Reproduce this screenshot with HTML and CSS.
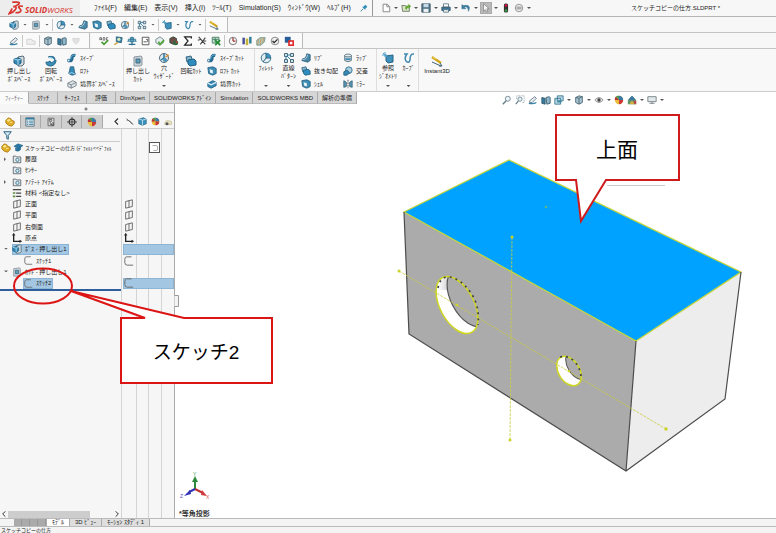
FILE: index.html
```html
<!DOCTYPE html>
<html lang="ja">
<head>
<meta charset="utf-8">
<title>スケッチコピーの仕方.SLDPRT</title>
<link rel="stylesheet" href="styles.css">
</head>
<body>
<svg class="defs" aria-hidden="true">
  <symbol id="boss" viewBox="0 0 12 12"><path d="M5 2l5-1 1 1v7l-2 2H5z" fill="#d5dde2" stroke="#526b78"/><path d="M1 4l4-1 3 1v4L5 10 1 8z" fill="#3688b5" stroke="#1f5f84"/><path d="M1 4l4 1 3-1M5 5v5" stroke="#a9daf0" fill="none"/></symbol>
  <symbol id="cut" viewBox="0 0 12 12"><path d="M2 2l7-1 1 1v8l-2 1H2z" fill="#c9d2d8" stroke="#8b989f"/><path d="M4 4h4v4H4z" fill="#5f9fbe" stroke="#456b80"/></symbol>
  <symbol id="revolve" viewBox="0 0 12 12"><path d="M3 2q6-2 7 2 0 3-4 4L5 6Q3 8 1 7q0 4 5 4 5-1 5-6" fill="#3b8fbb" stroke="#226589"/><path d="M4 3q3-1 4 1" stroke="#b9e3f3" fill="none"/></symbol>
  <symbol id="sweep" viewBox="0 0 12 12"><path d="M2 9q4 1 4-3t4-3" stroke="#256a90" stroke-width="4" fill="none"/><path d="M2 8q3 0 3-3 1-3 5-3" stroke="#6dbbdc" fill="none"/><circle cx="2" cy="9" r="1.6" fill="#dceef6" stroke="#256a90"/></symbol>
  <symbol id="loft" viewBox="0 0 12 12"><path d="M4 1h4l1 6 1 3-4 1-4-2 1-3z" fill="#3688b5" stroke="#1f5f84"/><path d="M2 9l4-1 4 2" stroke="#b5dff2" fill="none"/></symbol>
  <symbol id="boundary" viewBox="0 0 12 12"><path d="M1 5l6-3 4 2v4l-6 3-4-2z" fill="#dfe4e7" stroke="#6d7a82"/><path d="M1 5l4 2 6-3M5 7v4" stroke="#6d7a82" fill="none"/></symbol>
  <symbol id="boundarycut" viewBox="0 0 12 12"><path d="M1 5l6-3 4 2v4l-6 3-4-2z" fill="#3688b5" stroke="#1f5f84"/><path d="M1 5l4 2 6-3" stroke="#d8eef7" stroke-width="1.5" fill="none"/></symbol>
  <symbol id="wizard" viewBox="0 0 12 12"><circle cx="6" cy="6" r="4.5" fill="#dce8ee" stroke="#536c79"/><path d="M6 6V2M6 6L3 8" stroke="#2877a4" stroke-width="1.5"/><path d="M6 6l4-4 1 2z" fill="#d68628"/><circle cx="7" cy="8" r="2" fill="#4b91b8"/></symbol>
  <symbol id="fillet" viewBox="0 0 12 12"><circle cx="6" cy="6" r="4.8" fill="#e4eef2" stroke="#3b748f"/><path d="M6 6V1q5 0 5 5z" fill="#3f91b9"/><path d="M6 1v5h5M6 6l-3 4" fill="none" stroke="#2d6683"/></symbol>
  <symbol id="pattern" viewBox="0 0 12 12"><path d="M1.500 1.500h3v3h-3zM7.500 1.500h3v3h-3zM1.500 7.500h3v3h-3zM7.500 7.500h3v3h-3z" fill="#c9e1ed" stroke="#4c6876"/><path d="M4 3h4M3 4v4M4 4l4 4" stroke="#357d9e"/></symbol>
  <symbol id="rib" viewBox="0 0 12 12"><path d="M7 1l4 1v7l-3 2-7-2 1-2q4 0 5-6z" fill="#4a86a6" stroke="#2f627e"/><path d="M2 8q5 0 6-6" stroke="#b9dcea" fill="none"/></symbol>
  <symbol id="draft" viewBox="0 0 12 12"><path d="M1 2l5-1 1 3v3H2z" fill="#86b5cb" stroke="#326781"/><path d="M3 5l6-1 2 2v4l-6 1-2-2z" fill="#2f8dbe" stroke="#1f5f84"/></symbol>
  <symbol id="shell" viewBox="0 0 12 12"><path d="M1 2l6-1 4 2v6l-4 2-5-2z" fill="#3f8eb5" stroke="#245f7e"/><path d="M3 4l4 1v4L4 8z" fill="#eef5f8"/></symbol>
  <symbol id="wrap" viewBox="0 0 12 12"><path d="M2 3v6q4 3 8 0V3z" fill="#d2dde3" stroke="#4b6675"/><ellipse cx="6" cy="3" rx="4" ry="1.700" fill="#eef3f5" stroke="#4b6675"/><path d="M3 6q3 1 6 0v2q-3 1-6 0z" fill="#3688b5"/></symbol>
  <symbol id="intersect" viewBox="0 0 12 12"><circle cx="7" cy="5" r="4" fill="#a8cfe1" stroke="#2e6785"/><path d="M1 7l4-2 3 3-3 3H1z" fill="#3688b5" stroke="#245f7e"/></symbol>
  <symbol id="mirror" viewBox="0 0 12 12"><path d="M1 2l3 2v5l-3 1zM11 2L8 4v5l3 1z" fill="#5b9ab9" stroke="#345f75"/><path d="M6 1v10" stroke="#333" stroke-dasharray="2 1"/></symbol>
  <symbol id="refgeo" viewBox="0 0 12 12"><path d="M4 4l7-1v7l-5 1-2-2z" fill="#3f91bc" stroke="#246487"/><path d="M3 0v5M0 3h5M1 1l4 4" stroke="#4c9fc8"/></symbol>
  <symbol id="curve" viewBox="0 0 12 12"><path d="M1 2h3q-3 4-1 7 3 3 4-1 0-6 3-6h1" fill="none" stroke="#4088af" stroke-width="1.500"/></symbol>
  <symbol id="instant" viewBox="0 0 12 12"><path d="M1 2l9 6" stroke="#d3a51b" stroke-width="2.500"/><path d="M2 2l3 2" stroke="#f3e373" stroke-width="1"/><path d="M1 7l9 4M9 8l2 3-3 0" stroke="#3d6173" fill="none"/></symbol>
  <symbol id="pencil" viewBox="0 0 12 12"><path d="M2 7l6-5 2 2-5 5H2z" fill="#e9eff2" stroke="#597381"/><path d="M1 10q6 1 9-1" stroke="#3783a8" fill="none" stroke-width="1.500"/></symbol>
  <symbol id="ghost" viewBox="0 0 12 12"><path d="M1 4h6l1 2h3v4H1z" fill="#eee" stroke="#ccc"/></symbol>
  <symbol id="ghostball" viewBox="0 0 12 12"><path d="M2 3h8l-1 4-3 3-3-3z" fill="#e2e2e2" stroke="#d2d2d2"/></symbol>
  <symbol id="lamp" viewBox="0 0 12 12"><path d="M1 10q0-6 5-5l4 1v4z" fill="#e9e2c4" stroke="#c9bd93"/><circle cx="4" cy="9" r="2" fill="#555"/></symbol>
  <symbol id="cube" viewBox="0 0 12 12"><path d="M2 3l4-2 4 1v7l-4 2-4-2z" fill="#aac5d1" stroke="#425e6c"/><path d="M2 3l4 1v7M6 4l4-2" fill="none" stroke="#425e6c"/></symbol>
  <symbol id="section" viewBox="0 0 12 12"><path d="M1 3l4 1v7l-4-1z" fill="#377c9e" stroke="#31566a"/><path d="M6 3l4-1 1 1v7l-4 1z" fill="#90b8ca" stroke="#31566a"/></symbol>
  <symbol id="bluecube" viewBox="0 0 12 12"><path d="M1 3l6-2 4 2v6l-5 2-5-2z" fill="#3c91ba" stroke="#296b8d"/><path d="M1 3l5 1v7M6 4l5-1" fill="none" stroke="#d1edf7"/></symbol>
  <symbol id="abc" viewBox="0 0 12 12"><path d="M1 5V2h2v3M1 4h2M5 2v3h2V2zM11 2H9v3h2" stroke="#444" fill="none" stroke-width=".8"/><path d="M3 7l3 3 5-5" stroke="#4a9b36" stroke-width="2" fill="none"/></symbol>
  <symbol id="measure" viewBox="0 0 12 12"><path d="M4 1l7 1-1 6-6-1z" fill="#3a86ad" stroke="#295e79"/><circle cx="7" cy="4" r="2" fill="#d7ebbd"/><path d="M1 10l4-3 1 2-4 2z" fill="#d0ad49"/></symbol>
  <symbol id="mass" viewBox="0 0 12 12"><path d="M6 1v10M2 10h8" stroke="#2c708e" stroke-width="1.500"/><path d="M1 4h10M4 2h4v5H4z" stroke="#2c708e" fill="#5ba4c1"/><path d="M0 7h4L2 4zM8 7h4l-2-3z" fill="#3d87a6"/></symbol>
  <symbol id="sensor" viewBox="0 0 12 12"><path d="M1.500 1.500h8v9h-8zM3 7h4M6 4h2v3" fill="#fff" stroke="#444"/></symbol>
  <symbol id="check" viewBox="0 0 12 12"><path d="M1 4l5-3 4 3v4l-4 3-5-3z" fill="#e5eeee" stroke="#698087"/><path d="M4 7l2 3 5-5" stroke="#52a43b" stroke-width="2" fill="none"/></symbol>
  <symbol id="stats" viewBox="0 0 12 12"><path d="M1 3l4-2 4 2v5l-4 2-4-2z" fill="#704c46" stroke="#2d4b35"/><circle cx="8" cy="8" r="3" fill="#2e6845"/><path d="M8 8V5l3 3z" fill="#d53b32"/></symbol>
  <symbol id="sum" viewBox="0 0 12 12"><path d="M10 3V1H2l4 5-4 5h8V9" fill="none" stroke="#222" stroke-width="1.500"/></symbol>
  <symbol id="compare" viewBox="0 0 12 12"><path d="M2 1l8 9M1 5l4-1M4 10l6-8M8 6h3" stroke="#444" stroke-width="1.300" fill="none"/></symbol>
  <symbol id="sheet" viewBox="0 0 12 12"><path d="M1.500 1.500h8v7h-8zM2 4h7M5 2v6" fill="#c7e2d0" stroke="#397660"/><path d="M5 5l6 6M11 5l-6 6" stroke="#268b36" stroke-width="2"/></symbol>
  <symbol id="gauge" viewBox="0 0 12 12"><circle cx="6" cy="6" r="4.500" fill="#f7f7f7" stroke="#666"/><path d="M6 6V2M6 6h3" stroke="#a43434" stroke-width="1.500"/></symbol>
  <symbol id="bars" viewBox="0 0 12 12"><path d="M2 2v8" stroke="#4b4f9b" stroke-width="3"/><path d="M6 3v8" stroke="#c7b43a" stroke-width="3"/><path d="M10 1v8" stroke="#327e9b" stroke-width="3"/></symbol>
  <symbol id="zebra" viewBox="0 0 12 12"><path d="M1 5l4-3h6l-1 5-4 4H1z" fill="#a9cdbf" stroke="#6d8c80"/><path d="M3 4l-1 6M6 3L5 10M9 2L8 8" stroke="#d29a65" stroke-width="1.200"/></symbol>
  <symbol id="okring" viewBox="0 0 12 12"><circle cx="6" cy="6" r="4.600" fill="#f1f1f1" stroke="#777"/><path d="M3 6l2 2 4-4" stroke="#222" stroke-width="1.500" fill="none"/></symbol>
  <symbol id="redblue" viewBox="0 0 12 12"><path d="M1 1h7v7H1z" fill="#285f98"/><path d="M5 5h7v7H5z" fill="#e02d31"/><path d="M7 7h3v3H7z" fill="#fff"/></symbol>
  <symbol id="new" viewBox="0 0 12 12"><path d="M2.500 1.500h5l3 3v6h-8zM7 1.500v3h3" fill="#fff" stroke="#777"/></symbol>
  <symbol id="open" viewBox="0 0 12 12"><path d="M1 3h4l1 1h4v6H2z" fill="#d9e5c6" stroke="#65735a"/><path d="M5 7q0-4 4-4V1l3 3-3 3V5Q7 5 7 8z" fill="#60a52d"/></symbol>
  <symbol id="save" viewBox="0 0 12 12"><path d="M1 1h10v10H1z" fill="#56788b" stroke="#34505f"/><path d="M3 1h6v4H3z" fill="#c4dce8"/><path d="M3 7h6v4H3z" fill="#e9eff2"/></symbol>
  <symbol id="print" viewBox="0 0 12 12"><path d="M3 1h6v4H3z" fill="#fff" stroke="#567080"/><path d="M1 5h10v4H1z" fill="#39789b" stroke="#34505f"/><path d="M3 8h6v3H3z" fill="#f2f7fa" stroke="#567080"/></symbol>
  <symbol id="undo" viewBox="0 0 12 12"><path d="M1 2v5h5L4 5q4-2 5 5 4-9-6-7z" fill="#3b7ea4" stroke="#28607f" stroke-width=".5"/></symbol>
  <symbol id="arrow" viewBox="0 0 12 12"><path d="M3 1v9l2-2 2 3 1-1-1-3h3z" fill="#f6f6f6" stroke="#777" stroke-width=".8"/></symbol>
  <symbol id="light" viewBox="0 0 12 12"><rect x="3.500" y=".5" width="5" height="11" rx="2" fill="#333"/><circle cx="6" cy="3" r="1.500" fill="#d14"/><circle cx="6" cy="9" r="1.500" fill="#3a4"/></symbol>
  <symbol id="gear" viewBox="0 0 12 12"><circle cx="6" cy="6" r="4.500" fill="#eee" stroke="#888"/><path d="M3 5h6M3 7h6" stroke="#777"/></symbol>
  <symbol id="pin" viewBox="0 0 12 12"><path d="M1 11l4-4" stroke="#2d6e8f" stroke-width="1.300"/><path d="M3 4l5 5V7l3-3-3-3-3 3z" fill="#2d8eb9"/></symbol>
  <symbol id="zoomfit" viewBox="0 0 12 12"><circle cx="7" cy="4.500" r="3" fill="#edf3f6" stroke="#66808d"/><path d="M5 7l-4 4" stroke="#66808d" stroke-width="1.800"/></symbol>
  <symbol id="zoomarea" viewBox="0 0 12 12"><path d="M2 5V1h9v8H8" stroke="#9aabb3" stroke-dasharray="2 1" fill="none"/><circle cx="6" cy="5" r="2.500" fill="#edf3f6" stroke="#66808d"/><path d="M4 7l-3 4" stroke="#66808d" stroke-width="1.500"/></symbol>
  <symbol id="orient" viewBox="0 0 12 12"><path d="M4 1h7v6H4zM1 4h7v7H1z" fill="#b9d7e3" stroke="#34748e"/><path d="M4 7h5v2H4z" fill="#3688a5"/></symbol>
  <symbol id="eye" viewBox="0 0 12 12"><path d="M1 6q5-6 10 0-5 6-10 0z" fill="#e5e5e5" stroke="#888"/><circle cx="6" cy="6" r="2" fill="#444"/></symbol>
  <symbol id="ball" viewBox="0 0 12 12"><circle cx="6" cy="6" r="5" fill="#e8be38"/><path d="M6 6V1a5 5 0 0 1 5 5z" fill="#3b79ad"/><path d="M6 6L2 2a5 5 0 0 1 4-1z" fill="#4b9a56"/><path d="M6 6h5a5 5 0 0 1-5 5z" fill="#c9373b"/><path d="M6 6l-4-4a5 5 0 0 0-1 4z" fill="#b63338"/></symbol>
  <symbol id="scene" viewBox="0 0 12 12"><path d="M1 11V6l5-5 5 5v5z" fill="#629768"/><path d="M2 5l4-4 4 4-4 3z" fill="#3d78a3"/><path d="M3 11l3-5 3 5z" fill="#d1b23d"/><path d="M8 7h3v4H9z" fill="#bf4244"/></symbol>
  <symbol id="monitor" viewBox="0 0 12 12"><path d="M1 2h10v6H1zM6 8v2M3 10h6" fill="#e2e9ec" stroke="#6c767b"/></symbol>
  <symbol id="part" viewBox="0 0 12 12"><path d="M1 4l3-3 3 1 1 2 3 1v3l-3 3-4-1-3-3z" fill="#dfac24" stroke="#a97813"/><path d="M2 4l3-2 2 2-3 2z" fill="#f8e48b"/><path d="M6 7l3-1" stroke="#fff2a5"/></symbol>
  <symbol id="hat" viewBox="0 0 12 12"><path d="M1 4l5-3 6 2-5 4zM3 6v3q3 2 6-1V5l-2 2z" fill="#2878a5" stroke="#1f597b" stroke-width=".6"/></symbol>
  <symbol id="list" viewBox="0 0 12 12"><path d="M1 1h10v10H1z" fill="#e4ebee" stroke="#526a78"/><path d="M1 2h10" stroke="#317ca0" stroke-width="2"/><path d="M2 5h2M2 7h2M2 9h2M5 5h5M5 7h5M5 9h5" stroke="#317ca0"/></symbol>
  <symbol id="config" viewBox="0 0 12 12"><path d="M2.500 1.500h7v9h-7z" fill="#eee" stroke="#555"/><path d="M4 3h3v2H4zM5 5v4h3M7 7h2v3H7z" fill="none" stroke="#555"/></symbol>
  <symbol id="target" viewBox="0 0 12 12"><circle cx="6" cy="6" r="3.500" fill="none" stroke="#333" stroke-width="1.300"/><path d="M6 0v12M0 6h12" stroke="#333"/></symbol>
  <symbol id="hide" viewBox="0 0 12 12"><path d="M2 2l8 8M2 4l4 1 5 5" stroke="#555" fill="none"/></symbol>
  <symbol id="funnel" viewBox="0 0 12 12"><path d="M1 1h10L7 6v5l-2-1V6z" fill="#d9edf6" stroke="#245e7e" stroke-width="1.300"/></symbol>
  <symbol id="folder" viewBox="0 0 12 12"><path d="M1.500 2.500h3l1 1h5v7h-9z" fill="#e7eaec" stroke="#555e64"/><circle cx="6.500" cy="7" r="2" fill="#d3e8f0" stroke="#38758e"/></symbol>
  <symbol id="material" viewBox="0 0 12 12"><path d="M1 2h10M5 6h6M5 10h6" stroke="#444" stroke-width="1.500"/><path d="M1 5h3v2H1zM1 9h3v2H1z" fill="#5f8c3d"/></symbol>
  <symbol id="plane" viewBox="0 0 12 12"><path d="M2 3l4-1v8l-4 1zM6 2l4-1v8l-4 1" fill="none" stroke="#555"/></symbol>
  <symbol id="origin" viewBox="0 0 12 12"><path d="M2 1v9h9" fill="none" stroke="#222" stroke-width="1.600"/><path d="M0 3l2-3 2 3zM9 8l3 2-3 2z" fill="#222"/></symbol>
  <symbol id="sketch" viewBox="0 0 12 12"><path d="M9 1H3Q1 1 1 4v4q0 3 3 3h7" fill="none" stroke="#666" stroke-width="1.100"/></symbol>
  <symbol id="chev" viewBox="0 0 12 12"><path d="M8 2L4 6l4 4" fill="none" stroke="#333" stroke-width="1.500"/></symbol>
  <symbol id="chevr" viewBox="0 0 12 12"><path d="M4 2l4 4-4 4" fill="none" stroke="#333" stroke-width="1.500"/></symbol>
</svg>

<header>
  <div class="titlebar">
    <div class="brand">
      <svg class="ds" viewBox="0 0 16 14" aria-hidden="true"><path d="M4 1h4q4 0 2 2L5 6M5 5q4 0 2 3-2 3-6 4l3-5M14 5q-4-1-4 1l2 2q1 3-5 3" fill="none" stroke="#d8352f" stroke-width="1.500"/></svg>
      <span><b>SOLID</b>WORKS</span>
    </div>
    <nav class="menu">
      <button>ﾌｧｲﾙ(F)</button><button>編集(E)</button><button>表示(V)</button><button>挿入(I)</button><button>ﾂｰﾙ(T)</button><button>Simulation(S)</button><button>ｳｨﾝﾄﾞｳ(W)</button><button>ﾍﾙﾌﾟ(H)</button>
      <button class="pin" aria-label="ピン"><svg><use href="#pin"/></svg></button>
    </nav>
    <div class="quick">
      <button aria-label="新規"><svg><use href="#new"/></svg></button><i></i>
      <button aria-label="開く"><svg><use href="#open"/></svg></button><i></i>
      <button aria-label="保存"><svg><use href="#save"/></svg></button><i></i>
      <button aria-label="印刷"><svg><use href="#print"/></svg></button><i></i>
      <button aria-label="元に戻す"><svg><use href="#undo"/></svg></button><i></i>
      <button class="pressed" aria-label="選択"><svg><use href="#arrow"/></svg></button><i></i>
      <button aria-label="再構築"><svg><use href="#light"/></svg></button>
      <button aria-label="オプション"><svg><use href="#gear"/></svg></button><i></i>
    </div>
    <div class="doc">スケッチコピーの仕方.SLDPRT *</div>
  </div>

  <div class="strip">
    <div class="tools">
      <button aria-label="押し出し"><svg><use href="#boss"/></svg></button><i></i>
      <button aria-label="カット"><svg><use href="#cut"/></svg></button><i></i><hr>
      <button aria-label="フィレット"><svg><use href="#fillet"/></svg></button><i></i>
      <button aria-label="リブ"><svg><use href="#rib"/></svg></button>
      <button aria-label="シェル"><svg><use href="#shell"/></svg></button>
      <button aria-label="抜き勾配"><svg><use href="#draft"/></svg></button>
      <button aria-label="穴"><svg><use href="#wizard"/></svg></button><hr>
      <button aria-label="パターン"><svg><use href="#pattern"/></svg></button><i></i><hr>
      <button aria-label="参照"><svg><use href="#refgeo"/></svg></button><i></i>
      <button aria-label="カーブ"><svg><use href="#curve"/></svg></button><i></i><hr>
      <button aria-label="Instant3D"><svg><use href="#instant"/></svg></button>
    </div>
  </div>
  <div class="strip">
    <div class="tools">
      <button aria-label="スケッチ"><svg><use href="#pencil"/></svg></button><hr>
      <button aria-label="フォルダ"><svg><use href="#ghost"/></svg></button><hr>
      <button aria-label="表示"><svg><use href="#cube"/></svg></button>
      <button aria-label="断面"><svg><use href="#section"/></svg></button>
      <button aria-label="影"><svg><use href="#ghostball"/></svg></button>
    </div>
    <div class="tools">
      <button aria-label="スペル"><svg><use href="#abc"/></svg></button>
      <button aria-label="測定"><svg><use href="#measure"/></svg></button>
      <button aria-label="質量"><svg><use href="#mass"/></svg></button>
      <button aria-label="断面特性"><svg><use href="#sensor"/></svg></button>
      <button aria-label="チェック"><svg><use href="#check"/></svg></button>
      <button aria-label="統計"><svg><use href="#stats"/></svg></button>
      <button aria-label="関係式"><svg><use href="#sum"/></svg></button>
      <button aria-label="比較"><svg><use href="#compare"/></svg></button>
      <button aria-label="テーブル"><svg><use href="#sheet"/></svg></button><hr>
      <button aria-label="評価"><svg><use href="#gauge"/></svg></button>
      <button aria-label="解析"><svg><use href="#bars"/></svg></button>
      <button aria-label="曲率"><svg><use href="#zebra"/></svg></button>
      <button aria-label="検証"><svg><use href="#okring"/></svg></button>
      <button aria-label="差分"><svg><use href="#redblue"/></svg></button>
    </div>
  </div>

  <div class="ribbon">
    <section class="g1">
      <button class="big low"><svg><use href="#boss"/></svg><span>押し出し</span><span>ﾎﾞｽ/ﾍﾞｰｽ</span></button>
      <button class="big low"><svg><use href="#revolve"/></svg><span>回転</span><span>ﾎﾞｽ/ﾍﾞｰｽ</span></button>
      <div class="stack">
        <button><svg><use href="#sweep"/></svg>ｽｲｰﾌﾟ</button>
        <button><svg><use href="#loft"/></svg>ﾛﾌﾄ</button>
        <button><svg><use href="#boundary"/></svg>境界ﾎﾞｽ/ﾍﾞｰｽ</button>
      </div>
    </section>
    <section class="g2">
      <button class="big low"><svg><use href="#cut"/></svg><span>押し出し</span><span>ｶｯﾄ</span></button>
      <button class="big"><svg><use href="#wizard"/></svg><span>穴</span><span>ｳｨｻﾞｰﾄﾞ</span><i></i></button>
      <button class="big low"><svg><use href="#draft"/></svg><span>回転ｶｯﾄ</span></button>
      <div class="stack">
        <button><svg><use href="#sweep"/></svg>ｽｲｰﾌﾟｶｯﾄ</button>
        <button><svg><use href="#shell"/></svg>ﾛﾌﾄ ｶｯﾄ</button>
        <button><svg><use href="#boundarycut"/></svg>境界ｶｯﾄ</button>
      </div>
    </section>
    <section class="g3">
      <button class="big"><svg><use href="#fillet"/></svg><span>ﾌｨﾚｯﾄ</span><i></i></button>
      <button class="big"><svg><use href="#pattern"/></svg><span>直線</span><span>ﾊﾟﾀｰﾝ</span><i></i></button>
      <div class="stack">
        <button><svg><use href="#rib"/></svg>ﾘﾌﾞ</button>
        <button><svg><use href="#draft"/></svg>抜き勾配</button>
        <button><svg><use href="#shell"/></svg>ｼｪﾙ</button>
      </div>
      <div class="stack">
        <button><svg><use href="#wrap"/></svg>ﾗｯﾌﾟ</button>
        <button><svg><use href="#intersect"/></svg>交差</button>
        <button><svg><use href="#mirror"/></svg>ﾐﾗｰ</button>
      </div>
    </section>
    <section class="g4">
      <button class="big"><svg><use href="#refgeo"/></svg><span>参照</span><span>ｼﾞｵﾒﾄﾘ</span><i></i></button>
      <button class="big"><svg><use href="#curve"/></svg><span>ｶｰﾌﾞ</span><i></i></button>
    </section>
    <section class="g5">
      <button class="big low"><svg><use href="#instant"/></svg><span>Instant3D</span></button>
    </section>
  </div>

  <div class="tabrow">
    <nav class="tabs">
      <button class="on">ﾌｨｰﾁｬｰ</button><button>ｽｹｯﾁ</button><button>ｻｰﾌｪｽ</button><button>評価</button><button>DimXpert</button><button>SOLIDWORKS ｱﾄﾞｲﾝ</button><button>Simulation</button><button>SOLIDWORKS MBD</button><button>解析の準備</button>
    </nav>
    <div class="headsup">
      <button aria-label="全体表示"><svg><use href="#zoomfit"/></svg></button>
      <button aria-label="一部拡大"><svg><use href="#zoomarea"/></svg></button>
      <button aria-label="前の表示"><svg><use href="#pencil"/></svg></button>
      <button aria-label="断面表示"><svg><use href="#section"/></svg></button>
      <button aria-label="表示方向"><svg><use href="#orient"/></svg></button><i></i>
      <button aria-label="表示スタイル"><svg><use href="#cube"/></svg></button><i></i>
      <button aria-label="表示/非表示"><svg><use href="#eye"/></svg></button><i></i>
      <button aria-label="外観"><svg><use href="#ball"/></svg></button>
      <button aria-label="シーン"><svg><use href="#scene"/></svg></button><i></i>
      <button aria-label="表示設定"><svg><use href="#monitor"/></svg></button><i></i>
    </div>
  </div>
</header>

<main>
  <aside>
    <div class="grip"></div>
    <div class="ptabs">
      <div class="pt">
        <button class="on" aria-label="ツリー"><svg><use href="#part"/></svg></button>
        <button aria-label="プロパティ"><svg><use href="#list"/></svg></button>
        <button aria-label="コンフィギュレーション"><svg><use href="#config"/></svg></button>
        <button aria-label="DimXpert"><svg><use href="#target"/></svg></button>
        <button aria-label="表示"><svg><use href="#ball"/></svg></button>
      </div>
      <div class="pane-icons">
        <svg><use href="#chev"/></svg><svg><use href="#hide"/></svg><svg><use href="#bluecube"/></svg><svg><use href="#ball"/></svg><svg><use href="#lamp"/></svg>
      </div>
    </div>
    <div class="tree">
      <div class="filter"><svg><use href="#funnel"/></svg></div>
      <ul>
        <li class="root"><span class="node"><svg><use href="#part"/></svg><svg><use href="#hat"/></svg><span>スケッチコピーの仕方 (ﾃﾞﾌｫﾙﾄ&lt;&lt;ﾃﾞﾌｫﾙ</span></span><span class="cell"><b class="swatch"><svg><use href="#sketch"/></svg></b></span></li>
        <li class="closed"><span class="node"><svg><use href="#folder"/></svg><span>履歴</span></span></li>
        <li><span class="node"><svg><use href="#folder"/></svg><span>ｾﾝｻｰ</span></span></li>
        <li class="closed"><span class="node"><svg><use href="#folder"/></svg><span>ｱﾉﾃｰﾄ ｱｲﾃﾑ</span></span></li>
        <li><span class="node"><svg><use href="#material"/></svg><span>材料 &lt;指定なし&gt;</span></span></li>
        <li><span class="node"><svg><use href="#plane"/></svg><span>正面</span></span><span class="cell"><svg><use href="#plane"/></svg></span></li>
        <li><span class="node"><svg><use href="#plane"/></svg><span>平面</span></span><span class="cell"><svg><use href="#plane"/></svg></span></li>
        <li><span class="node"><svg><use href="#plane"/></svg><span>右側面</span></span><span class="cell"><svg><use href="#plane"/></svg></span></li>
        <li><span class="node"><svg><use href="#origin"/></svg><span>原点</span></span><span class="cell"><svg><use href="#origin"/></svg></span></li>
        <li class="opened sel"><span class="node"><svg><use href="#boss"/></svg><span>ﾎﾞｽ - 押し出し1</span></span><span class="cell"></span></li>
        <li class="child"><span class="node"><svg><use href="#sketch"/></svg><span>ｽｹｯﾁ1</span></span><span class="cell"><svg><use href="#sketch"/></svg></span></li>
        <li class="opened"><span class="node"><svg><use href="#cut"/></svg><span>ｶｯﾄ - 押し出し1</span></span></li>
        <li class="child sel"><span class="node"><svg><use href="#sketch"/></svg><span>ｽｹｯﾁ2</span></span><span class="cell"><svg><use href="#sketch"/></svg></span></li>
      </ul>
      <div class="rollback"></div>
      <div class="scroll"><svg><use href="#chev"/></svg><span></span><svg><use href="#chevr"/></svg></div>
    </div>
  </aside>
  <div class="view">
    <svg viewBox="175 104 601 414" role="img" aria-label="穴のある直方体">
      <defs>
        <linearGradient id="bore"><stop offset="0" stop-color="#fff"/><stop offset="1" stop-color="#c4c4c4"/></linearGradient>
        <clipPath id="big"><ellipse cx="457" cy="305" rx="31" ry="17" transform="rotate(62 457 305)"/></clipPath>
        <clipPath id="small"><ellipse cx="569" cy="371" rx="16" ry="10.500" transform="rotate(58 569 371)"/></clipPath>
      </defs>
      <path d="M607 185.500h58" stroke="#ccc"/>
      <path d="M404 212L636 341 626 471 409 334z" fill="#ababab"/>
      <path d="M636 341L741 272 725 399 626 471z" fill="#ededed"/>
      <path d="M404 212L509 160 741 272 636 341z" fill="#00a2ff" stroke="#c5d63c" stroke-width="1.300"/>
      <path d="M404 212L409 334 626 471 725 399 741 272M636 341L626 471" fill="none" stroke="#4c4c4c" stroke-width="1.200"/>
      <g clip-path="url(#big)"><path d="M430 270h60v70h-60z" fill="#fff"/><path d="M438 276h14v14h-14z" fill="url(#bore)"/><ellipse cx="468" cy="298" rx="31" ry="17" transform="rotate(62 468 298)" fill="#ababab" stroke="#555" stroke-width="1.200"/></g>
      <g clip-path="url(#small)"><path d="M550 350h40v40h-40z" fill="#fff"/><ellipse cx="578" cy="365" rx="16" ry="10.500" transform="rotate(58 578 365)" fill="#ababab" stroke="#555"/></g>
      <g fill="none" stroke="#cfd820" stroke-width="1.500">
        <ellipse cx="457" cy="305" rx="31" ry="17" transform="rotate(62 457 305)"/>
        <ellipse cx="569" cy="371" rx="16" ry="10.500" transform="rotate(58 569 371)"/>
      </g>
      <g fill="none" stroke="#444" stroke-width="1.700" stroke-dasharray="2 4">
        <path d="M438 288Q440 276 450 277 461 279 471 293 480 306 478 325"/>
        <path d="M560 357Q568 355 574 361 580 367 581 376"/>
      </g>
      <path d="M512 237L510 440M399 271L666 429" stroke="#c9cc3e" stroke-width=".8" stroke-dasharray="3 1"/>
      <g fill="#ccd428"><circle cx="512" cy="237" r="1.500"/><circle cx="510" cy="440" r="1.500"/><circle cx="399" cy="271" r="1.500"/><circle cx="666" cy="429" r="1.700"/><circle cx="457" cy="305" r="1.300"/><circle cx="569" cy="371" r="1.300"/></g>
      <circle cx="546" cy="207" r="1.300" fill="#5cb78b"/>
      <g stroke-width="2"><path d="M195 489V480" stroke="#2b8a3c"/><path d="M195 489l8 4" stroke="#c0302e"/><path d="M195 489l-6 3" stroke="#2e31b5"/></g>
      <path d="M192 482l3-6 3 6z" fill="#2b8a3c"/><path d="M201 495l1-5 5 6z" fill="#d0393a"/><path d="M190 490l1 4-7 2z" fill="#2e31b5"/>
      <g class="axis"><text x="193" y="476" fill="#3a9a4a">Y</text><text x="206" y="499" fill="#d55">X</text><text x="180" y="498" fill="#55c">Z</text></g>
      <text class="viewname" x="179" y="516">*等角投影</text>
    </svg>
  </div>
  <svg class="notes" viewBox="0 104 776 414" role="img" aria-label="注釈">
    <path d="M174.500 295.500h4v11h-4" fill="#f4f4f4" stroke="#999"/>
    <g stroke="#dc1414" stroke-width="2">
      <ellipse cx="43" cy="286" rx="29" ry="17.500" fill="none"/>
      <path d="M121 318H145L71 291 184 318H272V383H121z" fill="#fff"/>
      <path d="M556 115H679V180H606L581 221 576 180H556z" fill="#fff" stroke="#cf1b1b"/>
    </g>
    <g class="note"><text class="s2" x="196" y="359">スケッチ2</text><text class="top" x="617" y="157">上面</text></g>
  </svg>
</main>

<footer>
  <nav class="sheets">
    <span class="nav"></span><button class="on">ﾓﾃﾞﾙ</button><button>3D ﾋﾞｭｰ</button><button>ﾓｰｼｮﾝ ｽﾀﾃﾞｨ 1</button>
  </nav>
  <div class="status">スケッチコピーの仕方</div>
</footer>
</body>
</html>
```

FILE: styles.css
```css
* { box-sizing: border-box; }

body {
  margin: 0;
  height: 100vh;
  display: flex;
  flex-direction: column;
  overflow: hidden;
  background: #fff;
  color: #222;
  font: 7px/8px "Liberation Sans", "Noto Sans CJK JP", sans-serif;
}

.defs { display: none; }

button {
  padding: 0;
  border: 0;
  background: none;
  color: inherit;
  font: inherit;
  white-space: nowrap;
}

svg { display: block; flex: none; }
button svg { width: 10px; height: 10px; }

/* drop-down arrow */
i {
  flex: none;
  width: 4px;
  height: 2px;
  background: #555;
  clip-path: polygon(0 0, 100% 0, 50% 100%);
}

header { flex: none; background: #f7f7f7; }

/* title bar */
.titlebar {
  display: flex;
  height: 17px;
  border-bottom: 1px solid #b5b5b5;
}
.brand {
  display: flex;
  align-items: center;
  width: 80px;
  padding-left: 8px;
  background: #ededed;
  color: #d8352f;
  font: italic 8px/10px "Open Sans", sans-serif;
}
.brand span { padding-top: 4px; }
.ds { width: 17px; height: 15px; }
.menu {
  display: flex;
  align-items: center;
  gap: 7px;
  width: 293px;
  padding-left: 14px;
  border-right: 1px solid #999;
}
.menu .pin { margin-left: auto; margin-right: 4px; }
.menu .pin svg { width: 8px; height: 8px; }
.quick {
  display: flex;
  align-items: center;
  gap: 3px;
  padding-left: 8px;
}
.pressed { background: #b9b9b9; outline: 1px solid #aaa; }
.doc {
  flex: 1;
  align-self: center;
  padding-left: 100px;
  font-size: 6px;
}

/* toolbars */
.strip {
  display: flex;
  height: 16px;
  gap: 2px;
  border-bottom: 1px solid #c4c4c4;
}
.tools {
  display: flex;
  align-items: center;
  gap: 4px;
  padding: 0 8px 0 9px;
  border-right: 1px solid #bbb;
  background: #fafafa;
}
.strip + .strip .tools + .tools { padding-left: 7px; }
.tools hr {
  width: 1px;
  height: 12px;
  margin: 0 -1px;
  border: 0;
  background: #c8c8c8;
}

/* ribbon */
.ribbon {
  display: flex;
  height: 43px;
  padding-left: 2px;
  border-bottom: 1px solid #ccc;
  background: #f8f8f8;
  font-size: 6px;
}
.ribbon section { display: grid; }
.ribbon section + section { border-left: 1px solid #ddd; }
.g1 { grid-template-columns: 34px 30px 57px; }
.g2 { grid-template-columns: 28px 24px 30px 48px; }
.g3 { grid-template-columns: 22px 23px 42px 34px; }
.g4 { grid-template-columns: 22px 19px; }
.g5 { grid-template-columns: 36px; }
.big {
  display: flex;
  flex-direction: column;
  align-items: center;
  justify-content: flex-start;
  height: 42px;
  padding-top: 3px;
}
.big.low { padding-top: 6px; }
.big svg { width: 12px; height: 12px; }
.big i { margin-top: auto; margin-bottom: 4px; }
.stack {
  display: grid;
  grid-template-rows: repeat(3, 13px);
  padding: 2px 0 0 1px;
}
.stack button { display: flex; align-items: center; gap: 3px; }

/* command tabs and view toolbar */
.tabrow {
  display: flex;
  height: 12px;
  background: #fff;
}
.tabs { display: flex; font-size: 6px; }
.tabs button {
  min-width: 29px;
  padding: 0 4px;
  border-right: 1px solid #aaa;
  border-bottom: 1px solid #bbb;
  background: #d6d6d6;
}
.tabs .on { background: #fafafa; border-bottom-color: #fafafa; color: #777; }
.headsup {
  display: flex;
  align-items: center;
  gap: 3px;
  margin-left: auto;
  margin-right: 112px;
  padding-top: 4px;
}

/* work area */
main {
  position: relative;
  display: flex;
  flex: 1;
  min-height: 0;
}
aside {
  display: flex;
  flex-direction: column;
  flex: none;
  width: 175px;
  border-right: 1px solid #aaa;
  background: #f6f6f6;
}
.grip {
  height: 9px;
  border-bottom: 1px solid #ccc;
  background: radial-gradient(circle at 86px 5px, #888 1px, transparent 2px);
}
.ptabs { display: flex; height: 16px; padding-top: 2px; border-bottom: 1px solid #ccc; }
.pt { display: grid; grid-template-columns: repeat(5, 1fr); width: 103px; }
.pt button {
  display: grid;
  place-items: center;
  border-right: 1px solid #aaa;
  background: #cfcfcf;
}
.pt .on { background: #fafafa; }
.pane-icons { display: flex; align-items: center; gap: 4px; padding-left: 9px; }
.pane-icons svg { width: 9px; height: 9px; }
.tree {
  display: flex;
  flex-direction: column;
  flex: 1;
  background:
    linear-gradient(#d4d4d4, #d4d4d4) 121px 0 / 1px 100% no-repeat,
    linear-gradient(#d4d4d4, #d4d4d4) 136px 0 / 1px 100% no-repeat,
    linear-gradient(#d4d4d4, #d4d4d4) 148px 0 / 1px 100% no-repeat,
    linear-gradient(#d4d4d4, #d4d4d4) 161px 0 / 1px 100% no-repeat;
}
.filter {
  width: 120px;
  height: 13px;
  padding: 2px 3px;
  border-bottom: 1px solid #ccc;
}
.filter svg { width: 9px; height: 9px; }
.tree ul {
  display: grid;
  grid-auto-rows: 1fr;
  height: 147px;
  margin: 0;
  padding: 0;
  list-style: none;
  font-size: 6px;
}
.tree li {
  position: relative;
  display: grid;
  grid-template-columns: 121px 1fr;
  column-gap: 2px;
}
.node {
  display: flex;
  align-items: center;
  justify-self: start;
  gap: 3px;
  max-width: 108px;
  margin-left: 12px;
  padding-right: 2px;
  white-space: nowrap;
}
.tree li svg { width: 10px; height: 10px; }
.root .node {
  max-width: 120px;
  margin-left: 1px;
  padding-right: 0;
  gap: 2px;
  font-size: 5px;
}
.child .node { margin-left: 23px; }
.child .node svg { width: 9px; height: 9px; margin-left: 1px; }
.cell { display: flex; align-items: center; padding-left: 1px; }
.sel .node, .sel .cell { background: #a3c7e3; box-shadow: inset 0 0 0 1px #8cb4d4; }
.tree .swatch {
  display: grid;
  place-items: center;
  width: 11px;
  height: 11px;
  margin-left: 25px;
  border: 1px solid #555;
  background: #fff;
}
.tree .swatch svg { width: 6px; height: 6px; transform: rotate(180deg); }
.closed::before, .opened::before {
  content: "";
  position: absolute;
  left: 4px;
  top: 4px;
  width: 2px;
  height: 4px;
  background: #666;
  clip-path: polygon(0 0, 100% 50%, 0 100%);
}
.opened::before { width: 4px; height: 2px; clip-path: polygon(0 0, 100% 0, 50% 100%); }
.rollback { width: 121px; height: 2px; background: #2e5f9c; }
.scroll {
  display: flex;
  align-items: center;
  width: 121px;
  height: 8px;
  margin-top: auto;
}
.scroll svg { width: 8px; height: 8px; }
.scroll span { width: 82px; height: 7px; margin-right: auto; background: #cdcdcd; }

.view { flex: 1; min-width: 0; }
.view svg { width: 100%; height: 100%; }
.axis { font-size: 5px; }
.viewname { font-size: 7px; font-weight: 700; fill: #333; }

/* callouts laid over the work area */
.notes {
  position: absolute;
  inset: 0;
  width: 100%;
  height: 100%;
  pointer-events: none;
}
.note { text-anchor: middle; fill: #000; }
.s2 { font-size: 19px; }
.top { font-size: 21px; }

/* bottom tabs and status */
footer { flex: none; background: #f4f4f4; }
.sheets { display: flex; height: 9px; padding-left: 14px; border-top: 1px solid #bbb; border-bottom: 1px solid #bbb; font-size: 6px; }
.sheets button { padding: 0 5px; border-right: 1px solid #aaa; background: #dedede; line-height: 7px; }
.sheets .on { background: #fff; }
.sheets .nav { width: 33px; background: repeating-linear-gradient(90deg, #aaa 0 7px, #999 7px 8px); }
.status { height: 6px; padding-left: 1px; font-size: 5px; line-height: 6px; }
```
